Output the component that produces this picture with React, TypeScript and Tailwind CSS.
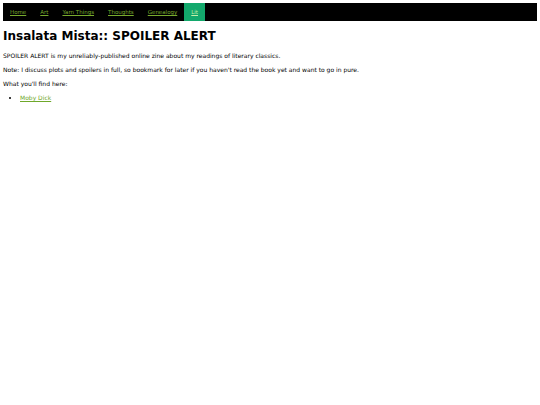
import React from "react";

const links = ["Home", "Art", "Yarn Things", "Thoughts", "Genealogy", "Lit"];

export default function App() {
  return (
    <div className="min-h-[405px] bg-white p-[3px] font-['DejaVu_Sans',sans-serif] text-black">
      <nav className="flex h-[18px] bg-black">
        {links.map((l) => (
          <a
            key={l}
            href="#"
            className={
              l === "Lit"
                ? "flex items-center bg-[#13a86c] px-[7px] text-[5.5px] text-[#c4f0a8] underline"
                : "flex items-center px-[7px] text-[5.5px] text-[#78ab2e] underline"
            }
          >
            {l}
          </a>
        ))}
      </nav>
      <h1 className="mt-[7px] text-[12px] font-bold leading-[17px]">Insalata Mista:: SPOILER ALERT</h1>
      <p className="mt-[7px] text-[6px] leading-[7px]">
        SPOILER ALERT is my unreliably-published online zine about my readings of literary classics.
      </p>
      <p className="mt-[7px] text-[6px] leading-[7px]">
        Note: I discuss plots and spoilers in full, so bookmark for later if you haven't read the book yet and want to go in pure.
      </p>
      <p className="mt-[7px] text-[6px] leading-[7px]">What you'll find here:</p>
      <ul className="mt-[7px] list-disc pl-[17px] text-[6px] leading-[7px]">
        <li>
          <a href="#" className="text-[#6fa82a] underline">
            Moby Dick
          </a>
        </li>
      </ul>
    </div>
  );
}
